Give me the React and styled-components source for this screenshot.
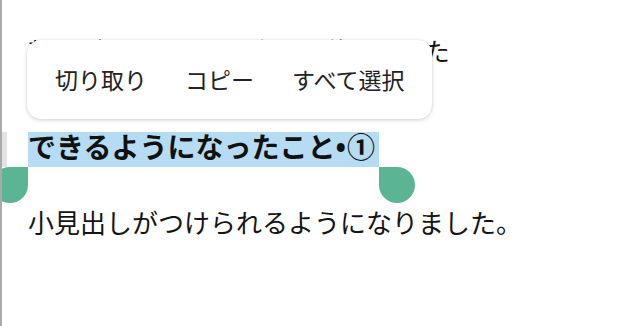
import React from "react"
import styled, { createGlobalStyle } from "styled-components"

const GlobalStyle = createGlobalStyle`
  html, body {
    margin: 0;
    padding: 0;
    background: #fff;
  }
  body {
    font-family: "Noto Sans CJK JP", "Noto Sans", sans-serif;
    color: #141414;
  }
`

const Editor = styled.div`
  position: relative;
  min-height: 326px;
  box-sizing: border-box;
  border-left: 2px solid #a9a9a9;
  padding-top: 32px;
  overflow: hidden;
`

const Paragraph = styled.p`
  margin: 0;
  padding-left: 26px;
  font-size: ${p => p.size}px;
  line-height: 36px;
  white-space: nowrap;
`

const HeadingBlock = styled.div`
  display: flex;
  margin-top: 57px;
  padding-top: 7px;
`

const BlockMarker = styled.div`
  width: 5px;
  background: #e3e3e3;
  flex-shrink: 0;
`

const Heading = styled.h2`
  margin: 0 0 0 21px;
  font-size: 28px;
  font-weight: 700;
  line-height: 35px;
  height: 35px;
  color: #111;
  white-space: nowrap;
`

const Highlight = styled.span`
  position: relative;
  display: inline-block;
  vertical-align: top;
  height: 35px;
  line-height: 29px;
  padding-right: 4px;
  background: #b5dcf2;
`

const Bullet = styled.span`
  font-family: "Noto Sans", sans-serif;
  font-weight: 700;
`

const Circled = styled.span`
  margin-left: 1px;
`

const Handle = styled.span`
  position: absolute;
  top: 100%;
  width: 36px;
  height: 36px;
  background: #5bb594;
  border-radius: ${p => (p.side === "left" ? "18px 0 18px 18px" : "0 18px 18px 18px")};
  ${p => (p.side === "left" ? "left: -36px;" : "right: -36px;")}
`

const Body = styled(Paragraph)`
  margin-top: 37px;
`

const Menu = styled.div`
  position: absolute;
  top: 40px;
  left: 25px;
  height: 79px;
  display: flex;
  align-items: center;
  gap: 38px;
  padding: 0 28px;
  background: #fff;
  border-radius: 14px;
  box-shadow: 0 1px 4px rgba(0, 0, 0, 0.18), 0 0 1px rgba(0, 0, 0, 0.12);
`

const MenuItem = styled.span`
  font-size: 23px;
  color: #222;
  line-height: 1;
  white-space: nowrap;
`

const items = ["切り取り", "コピー", "すべて選択"]

const App = () => {
  return (
    <>
      <GlobalStyle />
      <Editor>
        <Paragraph size={25}>新エディターで小見出しを使えました</Paragraph>

        <HeadingBlock>
          <BlockMarker />
          <Heading>
            <Highlight>
              できるようになったこと<Bullet>•</Bullet><Circled>①</Circled>
              <Handle side="left" />
              <Handle side="right" />
            </Highlight>
          </Heading>
        </HeadingBlock>

        <Body size={26}>小見出しがつけられるようになりました。</Body>

        <Menu>
          {items.map(label => (
            <MenuItem key={label}>{label}</MenuItem>
          ))}
        </Menu>
      </Editor>
    </>
  )
}

export default App
